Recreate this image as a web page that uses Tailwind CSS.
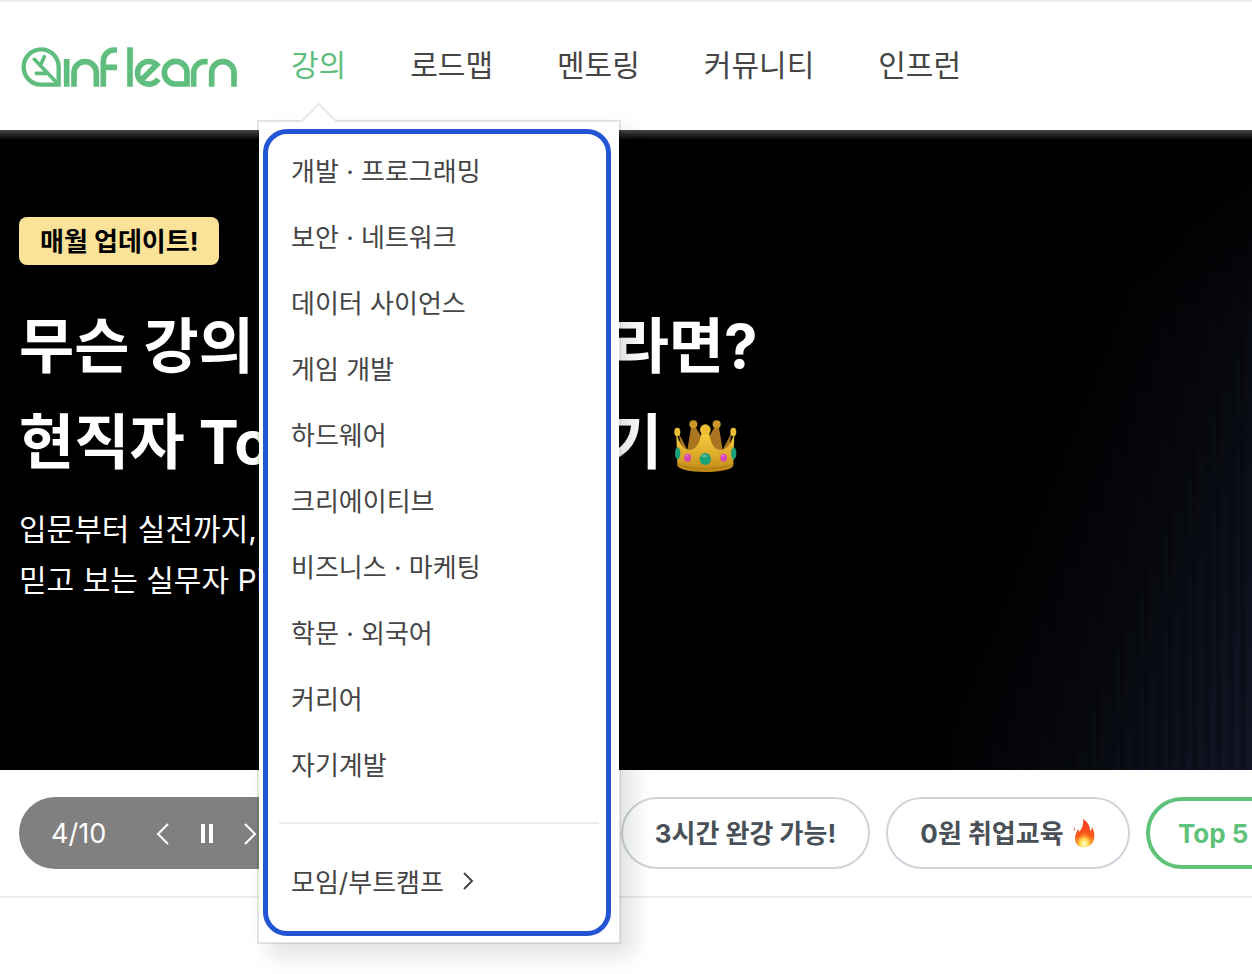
<!DOCTYPE html>
<html lang="ko">
<head>
<meta charset="utf-8">
<meta name="viewport" content="width=device-width, initial-scale=1">
<title>인프런</title>
<script src="https://cdn.jsdelivr.net/npm/@tailwindcss/browser@4"></script>
</head>
<body class="min-h-screen overflow-x-hidden bg-white font-[Inter,'Noto_Sans_CJK_KR',sans-serif] text-[#454545]">
<header class="relative z-20 flex h-[130px] items-center border-t-2 border-[#eeeeee] bg-white pb-0.5 pl-[21px]">
  <a href="#" aria-label="inflearn" class="mt-1 shrink-0">
    <svg class="h-[42px] w-[217px]" viewBox="63 48 651 126" fill="none" stroke="#5fbe7e" stroke-width="17">
      <path stroke-width="13" d="M176 164H124A52.500 53 0 1 1 176 111Z"/>
      <path stroke-width="11" stroke-linecap="round" d="M172 160L103 88M122 104L133 80M109 130H143"/>
      <path d="M200 87V170M222 170V128A33.500 33 0 0 1 289 128V170M310 170V94A33 34 0 0 1 343 60H351M310 112H351M390 52V170"/>
      <path d="M421 153L470 104A34 34 0 1 0 475 147"/>
      <path d="M561 162H528A34 34 0 1 1 561 128ZM581 170V128A33 33 0 0 1 614 95H623M635 170V128A33.500 33 0 0 1 702 128V170"/>
    </svg>
  </a>
  <nav class="ml-[53px] flex items-center gap-16 text-[30px] leading-10 whitespace-nowrap">
    <div class="relative">
      <a href="#" class="text-[#5fbe7e]">강의</a>
      <div class="absolute top-[75px] -left-[34px] w-[364px] border-2 border-black/10 bg-white bg-clip-padding px-1 pt-[7px] pb-[6px] shadow-[12px_12px_20px_0_rgba(10,20,20,0.12)]">
        <svg class="absolute -top-5 left-[41px] h-5 w-10" viewBox="0 0 40 20"><path d="M1 20L19 2L37 20Z" fill="#fff"/><path d="M1 20L19 2L37 20" fill="none" stroke="#e9e9e9" stroke-width="2"/></svg>
        <div class="w-[348px] rounded-[24px] border-5 border-[#2354d4] px-[11px] pt-[5px] pb-[15px] text-[26px]">
          <ul class="pb-[23px] pl-3">
            <li class="flex h-[66px] items-center"><a href="#">개발 · 프로그래밍</a></li>
            <li class="flex h-[66px] items-center"><a href="#">보안 · 네트워크</a></li>
            <li class="flex h-[66px] items-center"><a href="#">데이터 사이언스</a></li>
            <li class="flex h-[66px] items-center"><a href="#">게임 개발</a></li>
            <li class="flex h-[66px] items-center"><a href="#">하드웨어</a></li>
            <li class="flex h-[66px] items-center"><a href="#">크리에이티브</a></li>
            <li class="flex h-[66px] items-center"><a href="#">비즈니스 · 마케팅</a></li>
            <li class="flex h-[66px] items-center"><a href="#">학문 · 외국어</a></li>
            <li class="flex h-[66px] items-center"><a href="#">커리어</a></li>
            <li class="flex h-[66px] items-center"><a href="#">자기계발</a></li>
          </ul>
          <div class="-mr-1 border-t-2 border-[#e9ebee] pt-[26px] pl-3">
            <a href="#" class="flex h-[66px] items-center gap-4">모임/부트캠프
              <svg class="mb-1 h-5 w-4" viewBox="0 0 16 20" fill="none" stroke="#454545" stroke-width="2"><path d="M4 2L12 10L4 18"/></svg>
            </a>
          </div>
        </div>
      </div>
    </div>
    <a href="#">로드맵</a>
    <a href="#">멘토링</a>
    <a href="#">커뮤니티</a>
    <a href="#">인프런</a>
  </nav>
</header>
<main>
  <section class="relative h-[640px] overflow-hidden bg-black px-[19px] pt-[87px] whitespace-nowrap text-white">
    <div class="absolute inset-y-0 right-0 w-[300px] bg-[repeating-linear-gradient(90deg,rgba(0,0,0,0.2)_0_6px,transparent_6px_12px),linear-gradient(112deg,#000_38%,#06070c_60%,#121626_100%)] mask-[linear-gradient(to_bottom,transparent_0,#000_30%)]"></div>
    <div class="absolute inset-x-0 top-0 h-[10px] bg-linear-to-b from-[#484848] to-transparent"></div>
    <div class="relative">
      <p class="inline-flex h-12 items-center rounded-lg bg-[#fae298] px-[21px] text-[26px] font-bold text-black">매월 업데이트!</p>
      <h1 class="mt-[33px] text-[60px] leading-24 font-bold">무슨 강의 들을지 고민이라면?<br>
        <span class="flex items-center gap-2"><span>현직자 Top 강의</span> <span>보러가기</span>
          <svg class="mt-2 ml-1 h-[54px] w-[64px]" viewBox="0 0 192 162" role="img" aria-label="왕관">
            <defs><linearGradient id="gold" x1="0" y1="0" x2="0" y2="1"><stop offset="0" stop-color="#f8cf3d"/><stop offset=".6" stop-color="#dca82c"/><stop offset="1" stop-color="#b98512"/></linearGradient></defs>
            <path d="M14 42L40 92L52 20H62L94 72L124 20H134L146 92L172 42L162 130H30Z" fill="#a97520"/>
            <g fill="#cb9827"><circle cx="58" cy="16" r="12"/><circle cx="128" cy="16" r="12"/></g>
            <path d="M7 42Q18 82 35 90Q72 104 83 40H105Q114 104 151 90Q170 82 181 42L178 140Q166 158 94 159Q20 157 10 140Z" fill="url(#gold)"/>
            <g fill="#edbd33"><circle cx="94" cy="32" r="16"/><ellipse cx="10" cy="39" rx="9" ry="13"/><ellipse cx="178" cy="39" rx="9" ry="13"/></g>
            <path d="M9 134Q36 148 94 149Q152 148 179 134" fill="none" stroke="#9c7012" stroke-width="2"/>
            <g fill="#1ba078"><ellipse cx="94" cy="120" rx="17" ry="18"/><ellipse cx="11" cy="103" rx="8" ry="18"/><ellipse cx="179" cy="103" rx="8" ry="18"/></g>
            <g fill="#d847b7"><ellipse cx="41" cy="116" rx="10" ry="12"/><ellipse cx="149" cy="116" rx="10" ry="12"/></g>
            <g fill="#fff" opacity=".3"><ellipse cx="91" cy="111" rx="8" ry="4"/><ellipse cx="39" cy="110" rx="4" ry="3"/><ellipse cx="147" cy="110" rx="4" ry="3"/></g>
          </svg>
        </span>
      </h1>
      <p class="mt-[14px] text-[30px] leading-[51px]">입문부터 실전까지,<br>믿고 보는 실무자 Pick 강의</p>
    </div>
  </section>
  <section class="flex h-32 items-center overflow-hidden border-b-2 border-[#e9ebee] pl-[19px] whitespace-nowrap">
    <div class="flex h-[72px] w-[330px] shrink-0 items-center rounded-full bg-[#808080] pt-0.5 pl-8 text-[27px] text-white">
      <span class="w-[104px]">4/10</span>
      <button aria-label="이전" class="w-5"><svg class="h-6 w-4" viewBox="0 0 16 24" fill="none" stroke="#fff" stroke-width="2"><path d="M13 2L3 12L13 22"/></svg></button>
      <button aria-label="일시정지" class="ml-6 w-5"><svg class="h-6 w-4" viewBox="0 0 16 24" fill="#fff"><path d="M2 2H6V21H2ZM10 2H14V21H10Z"/></svg></button>
      <button aria-label="다음" class="ml-6 w-5"><svg class="h-6 w-4" viewBox="0 0 16 24" fill="none" stroke="#fff" stroke-width="2"><path d="M2 2L12 12L2 22"/></svg></button>
    </div>
    <div class="ml-[272px] flex gap-4 text-[26px] font-bold text-[#495057]">
      <button class="flex h-[72px] w-[249px] shrink-0 items-center justify-center rounded-full border-2 border-[#ced4da]">3시간 완강 가능!</button>
      <button class="flex h-[72px] w-[244px] shrink-0 items-center justify-center gap-2 rounded-full border-2 border-[#ced4da]">0원 취업교육
        <svg class="h-7 w-6" viewBox="0 0 24 28" role="img" aria-label="불">
          <defs>
            <linearGradient id="flame" x1="0" y1="0" x2="0" y2="1"><stop offset="0" stop-color="#f5361e"/><stop offset=".6" stop-color="#fa5a1c"/><stop offset="1" stop-color="#fdb52f"/></linearGradient>
            <radialGradient id="glow" cx=".5" cy=".85" r=".6"><stop offset="0" stop-color="#fffbd0"/><stop offset=".4" stop-color="#ffe25a"/><stop offset="1" stop-color="#ff8a20" stop-opacity="0"/></radialGradient>
          </defs>
          <path d="M11 0C17 4 18 8 18 12Q20 11 20 8C22 12 23 16 22 20C21 25 17 28 12 28C6 28 3 25 3 19C3 15 5 13 6 10Q7 11 7 13C10 10 12 5 11 0Z" fill="url(#flame)"/>
          <path d="M12 8C16 13 15 16 17 17Q19 16 19 14C22 22 19 28 12 28C6 28 3 23 5 17Q7 19 8 18C9 15 13 13 12 8Z" fill="url(#glow)"/>
          <path d="M3 8Q3 11 2 12Q1 10 3 8Z" fill="#f5461e"/>
        </svg>
      </button>
      <button class="flex h-[72px] shrink-0 items-center rounded-full border-4 border-[#5fc27b] px-7 text-[#5fc27b]">Top 5 강의</button>
    </div>
  </section>
</main>
</body>
</html>
